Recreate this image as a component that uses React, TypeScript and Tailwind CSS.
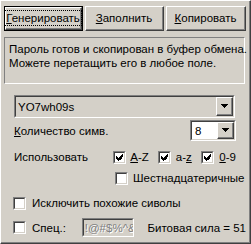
import React from 'react';

const face = 'bg-[#d4d0c8]';

function Raised({ children, className = '' }: { children?: React.ReactNode; className?: string }) {
    return (
        <div className={`border-t border-l border-white border-r border-b border-r-[#404040] border-b-[#404040] ${className}`}>
            <div className="w-full h-full border-r border-b border-[#808080] flex items-center justify-center">
                {children}
            </div>
        </div>
    );
}

function Sunken({ children, className = '', inner = '' }: { children?: React.ReactNode; className?: string; inner?: string }) {
    return (
        <div className={`border-t border-l border-[#808080] border-r border-b border-r-white border-b-white ${className}`}>
            <div className={`w-full h-full border-t border-l border-[#404040] border-r border-b border-r-[#d4d0c8] border-b-[#d4d0c8] ${inner}`}>
                {children}
            </div>
        </div>
    );
}

function Arrow() {
    return (
        <Raised className={`w-[17px] h-full ${face}`}>
            <svg width="7" height="4" viewBox="0 0 7 4" shapeRendering="crispEdges">
                <path d="M0 0h7v1H0zM1 1h5v1H1zM2 2h3v1H2zM3 3h1v1H3z" fill="#000" />
            </svg>
        </Raised>
    );
}

function CheckBox({ checked = false }: { checked?: boolean }) {
    return (
        <Sunken className="w-[13px] h-[13px] shrink-0" inner="bg-white flex items-center justify-center">
            {checked && (
                <svg width="7" height="7" viewBox="0 0 7 7" shapeRendering="crispEdges">
                    <path d="M6 0h1v3H6zM5 1h1v4H5zM4 2h1v4H4zM0 2h1v3H0zM1 3h1v3H1zM2 4h1v3H2zM3 3h1v3H3z" fill="#000" />
                </svg>
            )}
        </Sunken>
    );
}

export default function App() {
    return (
        <div className={`w-[251px] h-[244px] ${face} border-t border-l border-white border-r border-b border-r-[#404040] border-b-[#404040] font-['Liberation_Sans',sans-serif] text-[11.5px] leading-[14px] text-black overflow-hidden`}>
            <div className="w-full h-full border-r border-b border-[#808080] px-[3px] pt-[5px]">
                {/* Кнопки */}
                <div className="flex gap-[2px]">
                    <div className="w-[79px] h-[25px] border border-black">
                        <Raised className="w-full h-full">
                            <span className="border border-dotted border-black px-[1px] whitespace-nowrap">
                                <u>Г</u>енерировать
                            </span>
                        </Raised>
                    </div>
                    <Raised className="w-[79px] h-[25px]">
                        <span><u>З</u>аполнить</span>
                    </Raised>
                    <Raised className="w-[80px] h-[25px]">
                        <span><u>К</u>опировать</span>
                    </Raised>
                </div>

                {/* Сообщение */}
                <div className="mt-[6px] w-[241px] h-[47px] border-t border-l border-[#808080] border-r border-b border-r-white border-b-white px-[4px] pt-[4px] whitespace-nowrap">
                    Пароль готов и скопирован в буфер обмена.<br />
                    Можете перетащить его в любое поле.
                </div>

                <div className="pl-[10px] pr-[10px]">
                    {/* Пароль */}
                    <Sunken className="mt-[11px] w-[221px] h-[23px]" inner="flex">
                        <div className="flex-1 pl-[2px] flex items-center">YO7wh09s</div>
                        <Arrow />
                    </Sunken>

                    {/* Количество */}
                    <div className="mt-[2px] flex items-center justify-between">
                        <span><u>К</u>оличество симв.</span>
                        <Sunken className="w-[46px] h-[21px]" inner="bg-white flex">
                            <div className="flex-1 pl-[3px] flex items-center">8</div>
                            <Arrow />
                        </Sunken>
                    </div>

                    {/* Использовать */}
                    <div className="mt-[9px] flex items-center">
                        <span className="w-[101px]">Использовать</span>
                        <CheckBox checked />
                        <span className="ml-[4px] w-[28px]"><u>A</u>-Z</span>
                        <CheckBox checked />
                        <span className="ml-[5px] w-[26px]">a-<u>z</u></span>
                        <CheckBox checked />
                        <span className="ml-[5px]"><u>0</u>-9</span>
                    </div>
                    <div className="mt-[7px] flex items-center pl-[101px] whitespace-nowrap">
                        <CheckBox />
                        <span className="ml-[5px]">Шестнадцатеричные</span>
                    </div>
                </div>

                {/* Исключить / Спец */}
                <div className="pl-[9px]">
                    <div className="mt-[11px] flex items-center whitespace-nowrap">
                        <CheckBox />
                        <span className="ml-[6px]">Исключить похожие сиволы</span>
                    </div>
                    <div className="mt-[8px] flex items-center whitespace-nowrap">
                        <CheckBox />
                        <span className="ml-[6px] w-[50px]">Спец.:</span>
                        <Sunken className="w-[52px] h-[19px] overflow-hidden" inner="flex items-center pl-[1px] text-[#808080] [text-shadow:1px_1px_0_#fff]">
                            !@#$%^&amp;
                        </Sunken>
                        <span className="ml-[14px]">Битовая сила = 51</span>
                    </div>
                </div>
            </div>
        </div>
    );
}
